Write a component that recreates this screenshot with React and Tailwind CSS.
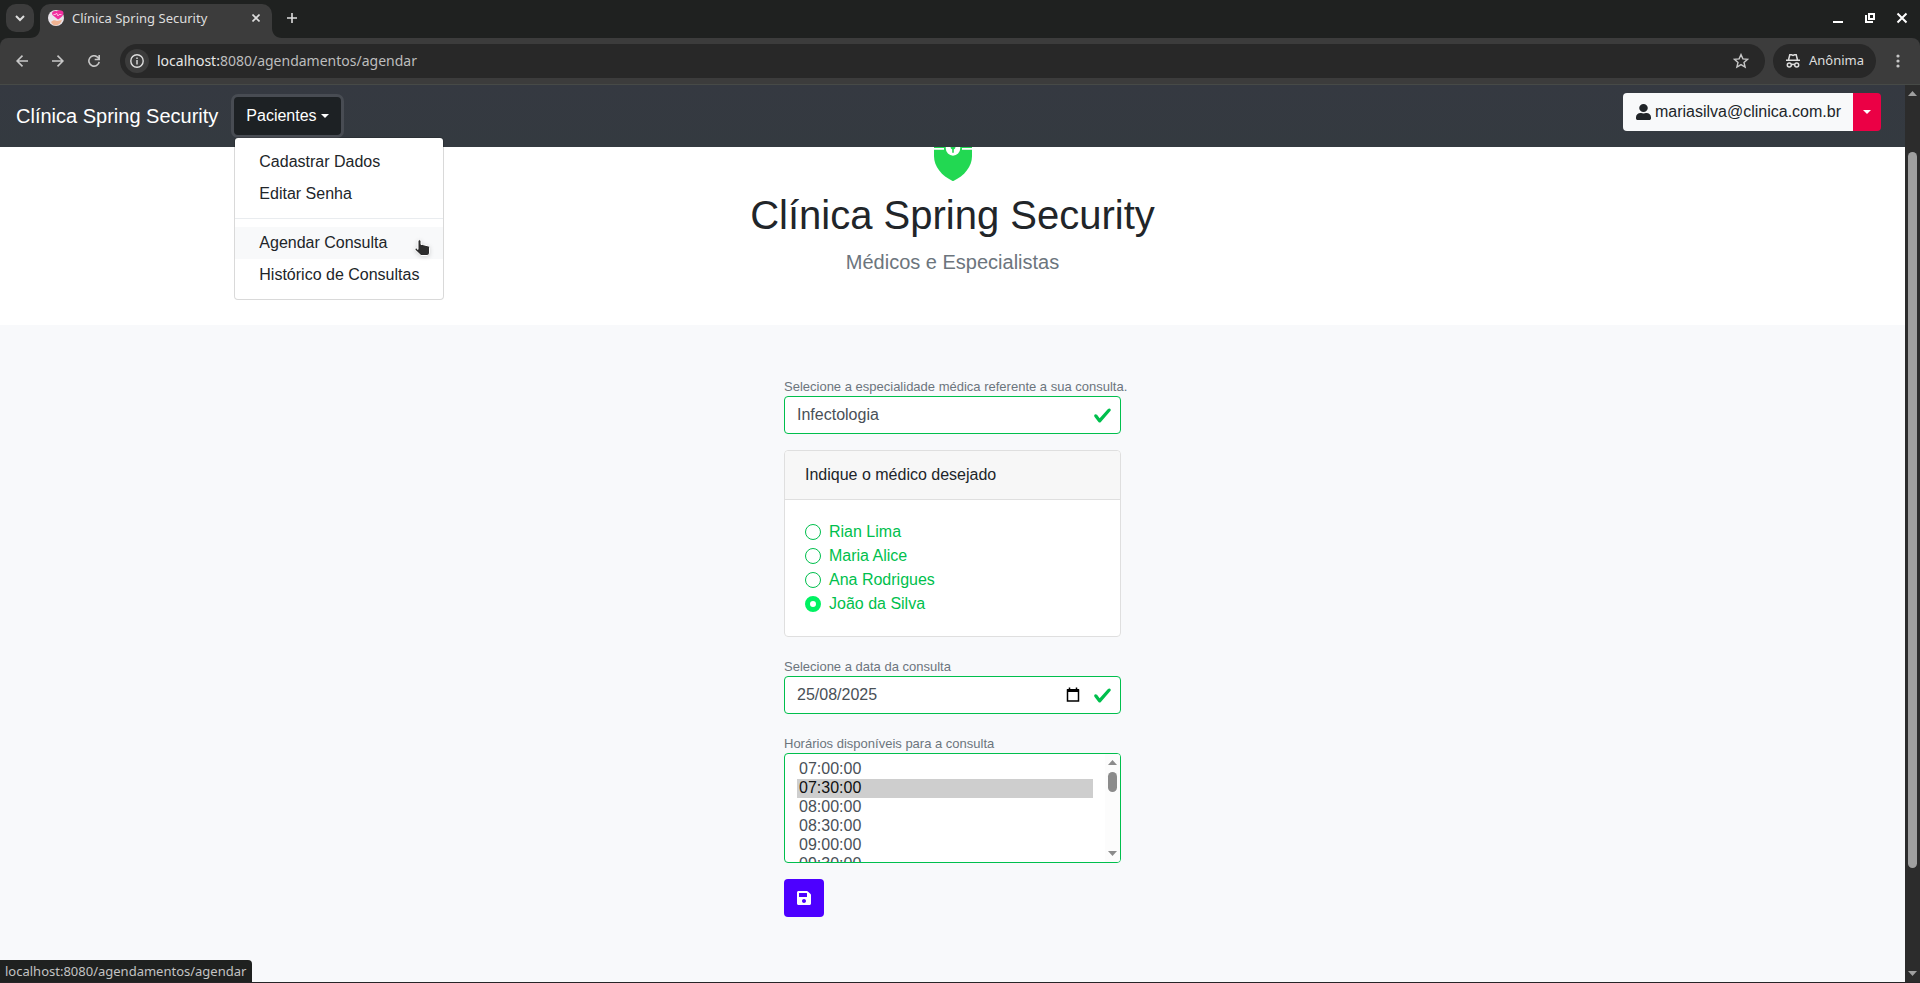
import React from "react";

const NAV_FONT = "font-['Noto_Sans',sans-serif]";

const doctors = ["Rian Lima", "Maria Alice", "Ana Rodrigues", "João da Silva"];

const times = [
  "07:00:00", "07:30:00", "08:00:00", "08:30:00", "09:00:00", "09:30:00", "10:00:00", "10:30:00",
  "11:00:00", "11:30:00", "13:00:00", "13:30:00", "14:00:00", "14:30:00", "15:00:00", "15:30:00",
];

function CheckMark() {
  return (
    <svg className="pointer-events-none h-[19px] w-[19px] shrink-0" viewBox="0 0 8 8" aria-hidden="true">
      <path fill="#00bf4d" d="M2.3 6.73L.6 4.53c-.4-1.04.46-1.4 1.1-.8l1.1 1.4 3.4-3.8c.6-.63 1.6-.27 1.2.7l-4 4.6c-.43.5-.8.4-1.1.1z" />
    </svg>
  );
}

function Favicon() {
  return (
    <svg className="h-4 w-4 shrink-0" viewBox="0 0 16 16" aria-hidden="true">
      <circle cx="8" cy="8" r="8" fill="#e9e4ea" />
      <path d="M3 12c2-2 4-2 6-1l5-1c-1 3-3 5-6 5.500-2 0-4-1-5-3.500z" fill="#f0b392" />
      <path d="M10 9.500L4.500 5C3 2.500 5.500 0 8.500 1.300 10.500-.5 15.500-.3 15.500 3c0 3-3 5-5.500 6.500z" fill="#f22fa0" />
      <path d="M5.500 4.500h2l1-1.500 1.500 3 1-1.500h2.500" fill="none" stroke="#ffd9ef" strokeWidth=".8" />
    </svg>
  );
}

function TabStrip() {
  return (
    <div className="flex h-[38px] shrink-0 items-start bg-[#1f2120] text-[#dedede]">
      <button aria-label="Pesquisar guias" className="ml-1.5 mt-1 flex h-7 w-7 items-center justify-center rounded-[10px] bg-[#3c3c3c]">
        <svg className="h-3 w-3" viewBox="0 0 12 12" fill="none" stroke="currentColor" strokeWidth="2"><path d="M2 4l4 4 4-4" /></svg>
      </button>
      <svg className="h-[38px] w-1.5 shrink-0 overflow-visible" viewBox="0 0 6 38" aria-hidden="true"><path d="M6 28v10H-4C2 38 6 34 6 28z" fill="#3c3c3c" /></svg>
      <div className="mt-1 flex h-[34px] w-[232px] items-start rounded-t-[10px] bg-[#3c3c3c] pl-2 pr-2">
        <div className="flex h-7 flex-1 items-center gap-2">
          <Favicon />
          <span className={`flex-1 whitespace-nowrap text-[13px] leading-5 ${NAV_FONT}`}>Clínica Spring Security</span>
          <button aria-label="Fechar guia" className="flex h-4 w-4 items-center justify-center">
            <svg className="h-2 w-2" viewBox="0 0 8 8" stroke="currentColor" strokeWidth="1.600"><path d="M.5.5l7 7M7.500.5l-7 7" /></svg>
          </button>
        </div>
      </div>
      <svg className="h-[38px] w-2 shrink-0 overflow-visible" viewBox="0 0 8 38" aria-hidden="true"><path d="M0 28v10h10C4 38 0 34 0 28z" fill="#3c3c3c" /></svg>
      <button aria-label="Nova guia" className="ml-1.5 mt-3 flex h-3 w-3 items-center justify-center">
        <svg className="h-3 w-3" viewBox="0 0 12 12" stroke="currentColor" strokeWidth="1.600"><path d="M6 1v10M1 6h10" /></svg>
      </button>
      <div className="flex-1" />
      <div className="mr-3 flex h-9 items-center gap-5 text-white">
        <button aria-label="Minimizar"><svg className="h-3 w-3" viewBox="0 0 12 12"><path d="M1 9h10v2H1z" fill="currentColor" /></svg></button>
        <button aria-label="Restaurar"><svg className="h-3 w-3" viewBox="0 0 12 12" fill="none" stroke="currentColor" strokeWidth="2"><path d="M5 2h5v5H5zM2 3v7h7" /></svg></button>
        <button aria-label="Fechar"><svg className="h-3 w-3" viewBox="0 0 12 12" stroke="currentColor" strokeWidth="2"><path d="M1.500 1.500l9 9M10.500 1.500l-9 9" /></svg></button>
      </div>
    </div>
  );
}

function Toolbar() {
  return (
    <div className="shrink-0 bg-[#1f2120]">
      <div className={`flex h-[47px] items-center rounded-t-lg border-b border-[#474a47] bg-[#3c3c3c] pl-4 pr-5 text-[#c7c7c7] ${NAV_FONT}`}>
        <div className="flex items-center gap-6">
          <button aria-label="Voltar"><svg className="h-3 w-3" viewBox="0 0 12 12" fill="none" stroke="currentColor" strokeWidth="1.600"><path d="M12 6H1M6.500.6L1.100 6l5.400 5.400" /></svg></button>
          <button aria-label="Avançar"><svg className="h-3 w-3" viewBox="0 0 12 12" fill="none" stroke="currentColor" strokeWidth="1.600"><path d="M0 6h11M5.500.6L10.900 6l-5.400 5.400" /></svg></button>
          <button aria-label="Recarregar"><svg className="h-3 w-3" viewBox="0 0 12 12" fill="none" stroke="currentColor" strokeWidth="1.600"><path d="M11.200 6.800A5.200 5.200 0 1 1 10 2.500L11 4M11.200 0v4.500H6.700" /></svg></button>
        </div>
        <div className="ml-5 flex h-[34px] flex-1 items-center rounded-full bg-[#282828] pl-[5px] pr-4">
          <button aria-label="Informações do site" className="flex h-6 w-6 items-center justify-center rounded-full bg-[#3c3c3c]">
            <svg className="h-3.5 w-3.5" viewBox="0 0 14 14" fill="none" stroke="#dedede" strokeWidth="1.400"><circle cx="7" cy="7" r="6.200" /><path d="M7 6v4.500M7 3.400V5" /></svg>
          </button>
          <span className="ml-2 flex-1 text-sm text-[#bdbdbd]"><span className="text-[#e6e6e6]">localhost:</span>8080/agendamentos/agendar</span>
          <button aria-label="Adicionar aos favoritos">
            <svg className="h-4 w-4" viewBox="0 0 16 16" fill="none" stroke="currentColor" strokeWidth="1.400"><path d="M8 1.600l1.900 4.300 4.700.4-3.600 3.100 1.100 4.600L8 11.600 3.900 14 5 9.400 1.400 6.300l4.700-.4z" /></svg>
          </button>
        </div>
        <div className="ml-2 flex h-[34px] items-center gap-2 rounded-full bg-[#282828] pl-3 pr-3 text-[#dedede]">
          <svg className="h-4 w-4" viewBox="0 0 16 16" fill="none" stroke="currentColor" strokeWidth="1.500"><path d="M1 7.300h14M3.500 7l1.300-5.200h1.700l1.500.7 1.500-.7h1.700L12.500 7M6.500 11.800q1.500-1 3 0" /><circle cx="4.300" cy="12" r="2" /><circle cx="11.700" cy="12" r="2" /></svg>
          <span className="text-[13px]">Anônima</span>
        </div>
        <button aria-label="Menu do navegador" className="ml-5">
          <svg className="h-4 w-1" viewBox="0 0 4 16" fill="currentColor"><circle cx="2" cy="3" r="1.600" /><circle cx="2" cy="8" r="1.600" /><circle cx="2" cy="13" r="1.600" /></svg>
        </button>
      </div>
    </div>
  );
}

function PatientsMenu() {
  const item = "block h-8 whitespace-nowrap px-6 leading-8 hover:bg-[#f8f9fa]";
  return (
    <div className="relative ml-4">
      <button className="flex h-[38px] items-center gap-1 rounded bg-[#1d2124] px-3 text-white ring-[3px] ring-[#484c53]">
        Pacientes
        <svg className="h-1 w-2" viewBox="0 0 8 4"><path d="M0 0h8L4 4z" fill="currentColor" /></svg>
      </button>
      <nav className="absolute left-0 top-full z-10 mt-0.5 rounded border border-black/15 bg-white bg-clip-padding py-2 text-[#212529]">
        <a href="#dados" className={item}>Cadastrar Dados</a>
        <a href="#senha" className={item}>Editar Senha</a>
        <div className="my-2 h-px bg-[#e9ecef]" />
        <a href="#agendar" className={`${item} bg-[#f8f9fa]`}>Agendar Consulta</a>
        <a href="#historico" className={item}>Histórico de Consultas</a>
        <svg className="absolute right-[13px] top-[101px] h-[18px] w-4 drop-shadow-sm" viewBox="0 0 16 18" aria-hidden="true">
          <path d="M4 1.500q1.500-1.500 3 0V5.500h1.500l6 1.500q1 .3 1 1.500V14q0 2.500-2.500 2.500H7L1 10.800Q.5 8.800 2.300 9L4 10.500z" fill="#2d2d2d" stroke="#fff" />
        </svg>
      </nav>
    </div>
  );
}

function Navbar() {
  return (
    <header className="flex h-[62px] shrink-0 items-center bg-[#343a40] bg-linear-to-b from-[#353941] to-[#343a40] pl-4 pr-6">
      <a href="#inicio" className="text-xl text-white">Clínica Spring Security</a>
      <PatientsMenu />
      <div className="ml-auto flex self-start pt-2">
        <button className="flex h-[38px] items-center gap-1 rounded-l bg-[#f8f9fa] pl-[13px] pr-3 text-[#212529]">
          <svg className="h-4 w-[15px]" viewBox="0 0 448 512" preserveAspectRatio="none" fill="currentColor"><path d="M224 256c70.700 0 128-57.300 128-128S294.700 0 224 0 96 57.300 96 128s57.300 128 128 128zm89.600 32h-16.700c-22.200 10.200-46.900 16-72.900 16s-50.600-5.800-72.900-16h-16.700C60.200 288 0 348.200 0 422.400V464c0 26.500 21.500 48 48 48h352c26.500 0 48-21.500 48-48v-41.600c0-74.200-60.200-134.400-134.400-134.400z" /></svg>
          mariasilva@clinica.com.br
        </button>
        <button aria-label="Opções da conta" className="flex h-[38px] w-7 items-center justify-center rounded-r bg-[#eb0045] text-white">
          <svg className="h-1 w-2" viewBox="0 0 8 4"><path d="M0 0h8L4 4z" fill="currentColor" /></svg>
        </button>
      </div>
    </header>
  );
}

function Hero() {
  return (
    <section className="flex flex-col items-center bg-white pb-12 text-[#212529]">
      <svg className="h-[34px] w-[38px]" viewBox="0 0 38 34" aria-hidden="true">
        <path d="M0 0h38v9c0 11-8 20-19 25.200C8 29 0 20 0 9z" fill="#22d852" />
        <path d="M0 1h10v1.800H0zM28 1h10v1.800H28z" fill="#fff" />
        <path d="M11.800 0h14.400v1.500a7.200 7.200 0 0 1-14.400 0z" fill="#fff" />
        <path d="M16.500 0h5q0 1.500-1.700 2.500v3.300h-1.600V2.500Q16.500 1.500 16.500 0z" fill="#22d852" />
      </svg>
      <h1 className="mt-2.5 text-[40px] leading-12">Clínica Spring Security</h1>
      <p className="mt-2 text-xl leading-[30px] text-[#6c757d]">Médicos e Especialistas</p>
    </section>
  );
}

function ScheduleForm() {
  const field = "flex h-[38px] items-center rounded border border-[#00bf4d] bg-white pl-3 pr-2 text-[#495057]";
  const hint = "block h-[19px] whitespace-nowrap text-[13px] leading-[19px] text-[#6c757d]";
  return (
    <form className="mx-auto w-[337px] pt-[52px] text-[#212529]">
      <label htmlFor="especialidade" className={hint}>Selecione a especialidade médica referente a sua consulta.</label>
      <div className={field}>
        <input id="especialidade" type="text" defaultValue="Infectologia" className="min-w-0 flex-1 outline-none" />
        <CheckMark />
      </div>

      <fieldset className="mt-4 rounded border border-[#dfdfdf] bg-white">
        <legend className="float-left w-full rounded-t border-b border-[#dfdfdf] bg-[#f7f7f7] px-5 py-3">Indique o médico desejado</legend>
        <div className="clear-both p-5">
          {doctors.map((name) => (
            <label key={name} className="flex h-6 items-center gap-2 text-[#00bf4d]">
              <input
                type="radio"
                name="medico"
                defaultChecked={name === "João da Silva"}
                className="h-4 w-4 appearance-none rounded-full border border-[#00bf4d] bg-white checked:border-[5px] checked:border-[#00f262]"
              />
              {name}
            </label>
          ))}
        </div>
      </fieldset>

      <label htmlFor="data" className={`${hint} mt-5`}>Selecione a data da consulta</label>
      <div className={field}>
        <input id="data" type="text" defaultValue="25/08/2025" className="min-w-0 flex-1 outline-none" />
        <button type="button" aria-label="Abrir calendário" className="mr-3">
          <svg className="h-4 w-4" viewBox="0 0 16 16" fill="none" stroke="#000"><path d="M2.500 3h11v11h-11z" strokeWidth="1.500" /><path d="M2 3.500h12" strokeWidth="3" /><path d="M4.500.5v2M11.500.5v2" strokeWidth="1.500" /></svg>
        </button>
        <CheckMark />
      </div>

      <label htmlFor="horario" className={`${hint} mt-5`}>Horários disponíveis para a consulta</label>
      <div className="flex h-[110px] overflow-hidden rounded border border-[#00bf4d] bg-white">
        <select
          id="horario"
          size={5}
          defaultValue="07:30:00"
          className="h-full min-w-0 flex-1 px-3 py-1.5 text-[#495057] outline-none [scrollbar-width:none]"
        >
          {times.map((t) => <option key={t} className="h-[19px] min-h-0 px-0.5 leading-[19px]">{t}</option>)}
        </select>
        <div className="flex w-[15px] flex-col items-center justify-between bg-[#fcfcfc] py-1.5" aria-hidden="true">
          <svg className="h-[5px] w-[9px]" viewBox="0 0 9 5"><path d="M0 5h9L4.500 0z" fill="#8b8b8b" /></svg>
          <div className="mb-auto mt-[7px] h-5 w-[9px] rounded-full bg-[#8b8b8b]" />
          <svg className="h-[5px] w-[9px]" viewBox="0 0 9 5"><path d="M0 0h9L4.500 5z" fill="#8b8b8b" /></svg>
        </div>
      </div>

      <button type="submit" aria-label="Salvar" className="mt-4 flex h-[38px] w-10 items-center justify-center rounded bg-[#4d00ff] text-white">
        <svg className="h-4 w-3.5" viewBox="0 0 448 512" fill="currentColor"><path d="M433.900 129.900l-83.900-83.900A48 48 0 0 0 316.100 32H48C21.500 32 0 53.500 0 80v352c0 26.500 21.500 48 48 48h352c26.500 0 48-21.500 48-48V163.900a48 48 0 0 0-14.100-34zM224 416c-35.300 0-64-28.700-64-64 0-35.300 28.700-64 64-64s64 28.700 64 64c0 35.300-28.700 64-64 64zm96-304.500V212c0 6.600-5.400 12-12 12H76c-6.600 0-12-5.400-12-12V108c0-6.600 5.400-12 12-12h228.500c3.200 0 6.200 1.300 8.500 3.500l3.500 3.500A12 12 0 0 1 320 111.500z" /></svg>
      </button>
    </form>
  );
}

function PageScrollbar() {
  return (
    <div className="flex w-[15px] shrink-0 flex-col items-center bg-[#2c2c2c] py-1.5" aria-hidden="true">
      <svg className="h-[5px] w-[9px]" viewBox="0 0 9 5"><path d="M0 5h9L4.500 0z" fill="#9f9f9f" /></svg>
      <div className="mt-14 w-[9px] flex-1 rounded-full bg-[#9f9f9f]" />
      <div className="h-[103px]" />
      <svg className="h-[5px] w-[9px]" viewBox="0 0 9 5"><path d="M0 0h9L4.500 5z" fill="#9f9f9f" /></svg>
    </div>
  );
}

export default function App() {
  return (
    <div className="flex h-screen flex-col overflow-hidden border-b border-[#262427] bg-[#f8f9fb]">
      <TabStrip />
      <Toolbar />
      <div className="relative flex min-h-0 flex-1 font-['Liberation_Sans',Arial,sans-serif] text-base">
        <div className="flex min-w-0 flex-1 flex-col">
          <Navbar />
          <main className="flex-1 overflow-hidden">
            <Hero />
            <ScheduleForm />
          </main>
        </div>
        <PageScrollbar />
        <div className={`absolute bottom-0 left-0 h-[22px] rounded-tr bg-[#1f2120] pl-[5px] pr-1.5 text-[13px] leading-[22px] text-[#c3c3c3] ${NAV_FONT}`}>
          localhost:8080/agendamentos/agendar
        </div>
      </div>
    </div>
  );
}
